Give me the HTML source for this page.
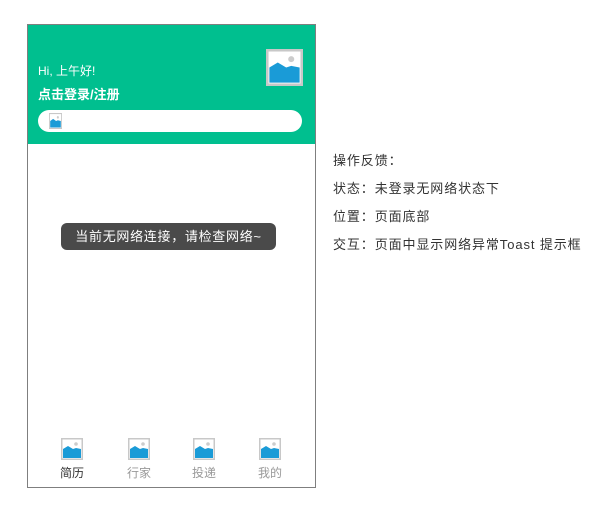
<!DOCTYPE html>
<html><head><meta charset="utf-8"><style>
body{margin:0;width:601px;height:524px;background:#fff;font-family:"Liberation Sans","Noto Sans CJK SC",sans-serif;position:relative;overflow:hidden}
.a{position:absolute}
.frame{left:27px;top:24px;width:287px;height:462px;border:1px solid #7f7f7f}
.hdr{left:28px;top:25px;width:287px;height:119px;background:#00bf8f}
.t{font-size:13px;color:#333;white-space:nowrap;letter-spacing:0.9px}
.lab{font-size:12px;color:#999;width:40px;text-align:center}
</style></head><body>
<svg width="0" height="0" style="position:absolute"><defs><symbol id="im" viewBox="0 0 22 22"><rect x="0.5" y="0.5" width="21" height="21" fill="#fff" stroke="#c8c8c8" stroke-width="2"/><circle cx="15" cy="6" r="1.8" fill="#ccc"/><path d="M2 11 L7 8 L12 11 L15 10 L20 11 V20 H2Z" fill="#1a9bd7"/></symbol></defs></svg>
<div class="a frame"></div>
<div class="a hdr"></div>
<div class="a" style="left:38px;top:62px;color:#fff;font-size:12px">Hi, 上午好!</div>
<div class="a" style="left:38px;top:84px;color:#fff;font-size:13px;font-weight:bold">点击登录/注册</div>
<svg class="a" style="left:266px;top:49px" width="37" height="37"><use href="#im"/></svg>
<div class="a" style="left:38px;top:110px;width:264px;height:22px;background:#fff;border-radius:11px"></div>
<svg class="a" style="left:49px;top:113px" width="13" height="16" viewBox="0 0 22 22" preserveAspectRatio="none"><use href="#im"/></svg>
<div class="a" style="left:61px;top:223px;width:215px;height:27px;background:#4a4a4a;border-radius:6px;color:#fff;font-size:13px;line-height:27px;text-align:center;letter-spacing:0.7px">当前无网络连接，请检查网络~</div>
<svg class="a" style="left:61px;top:438px" width="22" height="22"><use href="#im"/></svg>
<svg class="a" style="left:128px;top:438px" width="22" height="22"><use href="#im"/></svg>
<svg class="a" style="left:193px;top:438px" width="22" height="22"><use href="#im"/></svg>
<svg class="a" style="left:259px;top:438px" width="22" height="22"><use href="#im"/></svg>
<div class="a lab" style="left:52px;top:464px;color:#333">简历</div>
<div class="a lab" style="left:119px;top:464px">行家</div>
<div class="a lab" style="left:184px;top:464px">投递</div>
<div class="a lab" style="left:250px;top:464px">我的</div>
<div class="a t" style="left:333px;top:150px">操作反馈：</div>
<div class="a t" style="left:333px;top:178px">状态：未登录无网络状态下</div>
<div class="a t" style="left:333px;top:206px">位置：页面底部</div>
<div class="a t" style="left:333px;top:234px">交互：页面中显示网络异常Toast 提示框</div>
</body></html>
